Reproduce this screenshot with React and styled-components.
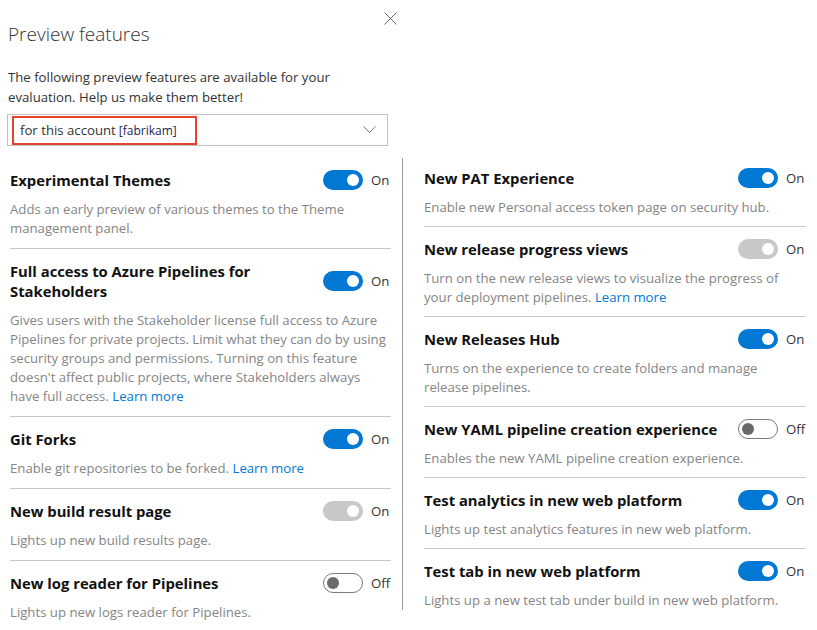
import React from 'react';
import styled, { createGlobalStyle } from 'styled-components';

const Global = createGlobalStyle`
  html, body { margin: 0; padding: 0; background: #ffffff; }
  body { font-family: "Open Sans", "Noto Sans", sans-serif; color: #333333; }
`;

const Page = styled.div`
  width: 817px;
  height: 630px;
  overflow: hidden;
  padding-left: 8px;
  box-sizing: border-box;
`;

const Top = styled.div`
  width: 389px;
`;

const Header = styled.div`
  display: flex;
  justify-content: space-between;
  align-items: flex-start;
`;

const Title = styled.h1`
  margin: 20px 0 0;
  font-size: 19px;
  line-height: 28px;
  font-weight: 300;
  color: #333333;
`;

const CloseButton = styled.button`
  margin: 11px 0 0;
  padding: 0;
  border: 0;
  background: transparent;
  width: 14px;
  height: 14px;
  display: flex;
  align-items: center;
  justify-content: center;
  color: #666666;
`;

const Intro = styled.p`
  margin: 19px 0 0;
  font-size: 13.2px;
  line-height: 20px;
  color: #333333;
`;

const Dropdown = styled.div`
  margin-top: 7px;
  margin-left: -1px;
  width: 381px;
  height: 32px;
  box-sizing: border-box;
  border: 1px solid #c2c2c2;
  display: flex;
  align-items: center;
  justify-content: space-between;
  padding: 0 11px 0 4px;
`;

const Highlight = styled.span`
  display: flex;
  align-items: center;
  height: 29px;
  box-sizing: border-box;
  border: 2px solid #e5432d;
  padding: 0 18px 0 6px;
  font-size: 13.2px;
  color: #333333;
  white-space: nowrap;
`;

const Account = styled.span`
  margin-left: 3px;
  font-size: 12px;
  color: #232350;
`;

const Columns = styled.div`
  margin-top: 12px;
  margin-left: 2px;
  display: grid;
  grid-template-columns: 381px 404px;
  column-gap: 11px;
  align-items: start;
`;

const Column = styled.div`
  display: flex;
  flex-direction: column;
  ${p => p.$divided && `
    border-left: 1px solid #9a9a9a;
    padding-left: 21px;
  `}
`;

const Item = styled.div`
  padding: 12px 0 ${p => (p.$dense ? '9px' : '10px')};
  & + & { border-top: 1px solid #c8c8c8; }
  &:first-child { padding-top: ${p => (p.$dense ? '10px' : '12px')}; }
  &:last-child { padding-bottom: 0; }
`;

const Row = styled.div`
  display: flex;
  align-items: center;
`;

const ItemTitle = styled.div`
  flex: 1;
  font-size: 14.8px;
  line-height: 20px;
  font-weight: 700;
  color: #111111;
  white-space: nowrap;
`;

const Toggle = styled.span`
  position: relative;
  width: 40px;
  height: 20px;
  box-sizing: border-box;
  border-radius: 10px;
  flex: none;
  background: ${p => (p.$state === 'on' ? '#0078d4' : p.$state === 'disabled' ? '#c8c8c8' : '#ffffff')};
  border: ${p => (p.$state === 'off' ? '1px solid #7a7a7a' : 'none')};
  &::after {
    content: '';
    position: absolute;
    top: ${p => (p.$state === 'off' ? '3px' : '4px')};
    ${p => (p.$state === 'off' ? 'left: 3px;' : 'right: 4px;')}
    width: 12px;
    height: 12px;
    border-radius: 50%;
    background: ${p => (p.$state === 'off' ? '#6a6a6a' : '#ffffff')};
  }
`;

const StateLabel = styled.span`
  width: 20px;
  margin-left: 8px;
  font-size: 13.2px;
  line-height: 20px;
  color: #333333;
`;

const Desc = styled.div`
  margin-top: 10px;
  font-size: 13.2px;
  line-height: 19px;
  color: #858585;
  white-space: nowrap;
`;

const Link = styled.a`
  color: #0078d4;
  text-decoration: none;
`;

const leftItems = [
  {
    title: ['Experimental Themes'],
    state: 'on',
    desc: ['Adds an early preview of various themes to the Theme', 'management panel.'],
  },
  {
    title: ['Full access to Azure Pipelines for', 'Stakeholders'],
    state: 'on',
    desc: [
      'Gives users with the Stakeholder license full access to Azure',
      'Pipelines for private projects. Limit what they can do by using',
      'security groups and permissions. Turning on this feature',
      "doesn't affect public projects, where Stakeholders always",
      'have full access.',
    ],
    link: true,
  },
  {
    title: ['Git Forks'],
    state: 'on',
    desc: ['Enable git repositories to be forked.'],
    link: true,
  },
  {
    title: ['New build result page'],
    state: 'disabled',
    desc: ['Lights up new build results page.'],
  },
  {
    title: ['New log reader for Pipelines'],
    state: 'off',
    desc: ['Lights up new logs reader for Pipelines.'],
  },
];

const rightItems = [
  {
    title: ['New PAT Experience'],
    state: 'on',
    desc: ['Enable new Personal access token page on security hub.'],
  },
  {
    title: ['New release progress views'],
    state: 'disabled',
    desc: ['Turn on the new release views to visualize the progress of', 'your deployment pipelines.'],
    link: true,
  },
  {
    title: ['New Releases Hub'],
    state: 'on',
    desc: ['Turns on the experience to create folders and manage', 'release pipelines.'],
  },
  {
    title: ['New YAML pipeline creation experience'],
    state: 'off',
    desc: ['Enables the new YAML pipeline creation experience.'],
  },
  {
    title: ['Test analytics in new web platform'],
    state: 'on',
    desc: ['Lights up test analytics features in new web platform.'],
  },
  {
    title: ['Test tab in new web platform'],
    state: 'on',
    desc: ['Lights up a new test tab under build in new web platform.'],
  },
];

function Lines({ lines, link }) {
  return lines.map((line, i) => (
    <React.Fragment key={i}>
      {i > 0 && <br />}
      {line}
      {link && i === lines.length - 1 && (
        <>
          {' '}
          <Link href="#">Learn more</Link>
        </>
      )}
    </React.Fragment>
  ));
}

function Feature({ item, dense }) {
  return (
    <Item $dense={dense}>
      <Row>
        <ItemTitle>
          <Lines lines={item.title} />
        </ItemTitle>
        <Toggle $state={item.state} role="switch" aria-checked={item.state !== 'off'} />
        <StateLabel>{item.state === 'off' ? 'Off' : 'On'}</StateLabel>
      </Row>
      <Desc>
        <Lines lines={item.desc} link={item.link} />
      </Desc>
    </Item>
  );
}

export default function App() {
  return (
    <>
      <Global />
      <Page>
        <Top>
          <Header>
            <Title>Preview features</Title>
            <CloseButton aria-label="Close">
              <svg width="13" height="13" viewBox="0 0 13 13">
                <path d="M0.5 0.5 L12.5 12.5 M12.5 0.5 L0.5 12.5" stroke="#6b6b6b" strokeWidth="1" fill="none" />
              </svg>
            </CloseButton>
          </Header>
          <Intro>
            The following preview features are available for your
            <br />
            evaluation. Help us make them better!
          </Intro>
          <Dropdown>
            <Highlight>
              for this account<Account>[fabrikam]</Account>
            </Highlight>
            <svg width="13" height="8" viewBox="0 0 13 8">
              <path d="M0.5 0.5 L6.5 6.5 L12.5 0.5" stroke="#7a7a7a" strokeWidth="1" fill="none" />
            </svg>
          </Dropdown>
        </Top>
        <Columns>
          <Column>
            {leftItems.map((it, i) => (
              <Feature key={i} item={it} />
            ))}
          </Column>
          <Column $divided>
            {rightItems.map((it, i) => (
              <Feature key={i} item={it} dense />
            ))}
          </Column>
        </Columns>
      </Page>
    </>
  );
}
